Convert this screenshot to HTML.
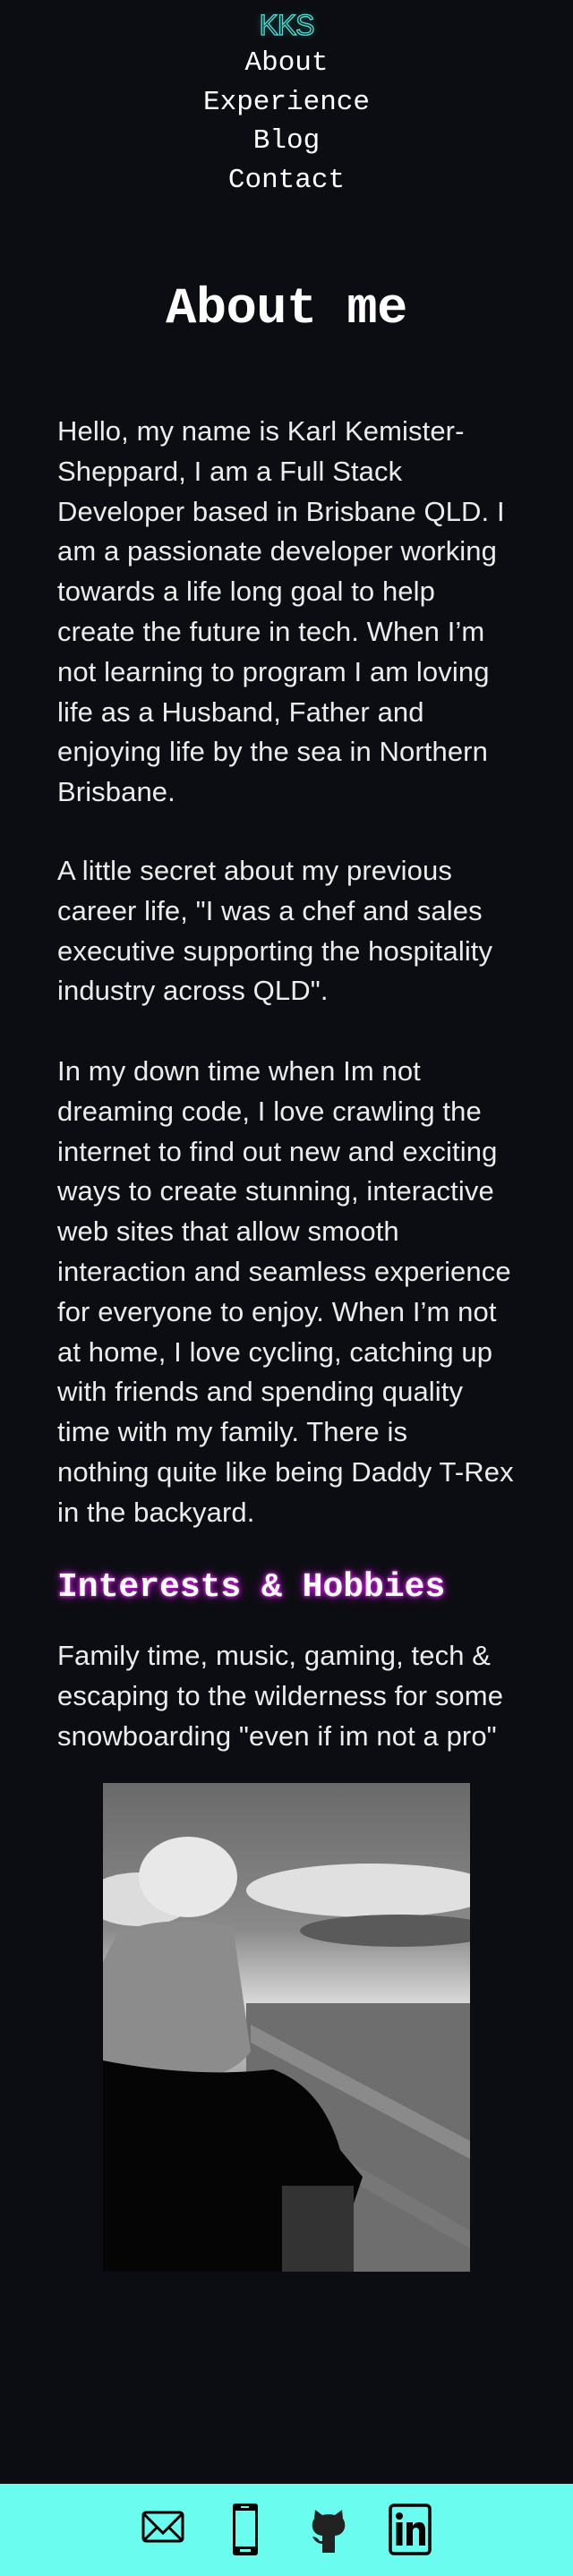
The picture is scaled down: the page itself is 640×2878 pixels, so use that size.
<!DOCTYPE html>
<html><head><meta charset="utf-8">
<style>
*{margin:0;padding:0;box-sizing:border-box}
html,body{width:640px;height:2878px;overflow:hidden}
body{background:#0c0d12;color:#fff;position:relative;font-family:"Liberation Sans",sans-serif}
.logo{position:absolute;left:0;width:640px;top:10px;text-align:center;font-family:"Liberation Sans",sans-serif;font-size:32px;color:transparent;-webkit-text-stroke:1.3px #4fe3d8;letter-spacing:-1px;text-shadow:0 0 8px rgba(79,227,216,.35)}
.nav{position:absolute;left:0;width:640px;top:49px;text-align:center;font-family:"Liberation Mono",monospace;font-size:31px;line-height:43.5px;letter-spacing:0}
h1{position:absolute;left:0;width:640px;top:311px;text-align:center;font-family:"Liberation Mono",monospace;font-weight:bold;font-size:57px;letter-spacing:-0.5px;line-height:70px}
.p{position:absolute;left:64px;font-size:31px;line-height:44.8px;white-space:nowrap;letter-spacing:0.1px;color:#ececec}
.p span{display:block}
h2{position:absolute;left:64px;top:1752px;font-family:"Liberation Mono",monospace;font-weight:bold;font-size:38px;letter-spacing:0px;color:#fff;text-shadow:0 0 6px #c01bd0,0 0 12px #a010b8,0 0 3px #e040f0}
.photo{position:absolute;left:115px;top:1992px;width:410px;height:546px}
footer{position:absolute;left:0;top:2775px;width:640px;height:103px;background:#69fcef;overflow:hidden}
</style></head><body>
<div class="logo">KKS</div>
<div class="nav">About<br>Experience<br>Blog<br>Contact</div>
<h1>About me</h1>
<div class="p" style="top:460px">
<span>Hello, my name is Karl Kemister-</span>
<span>Sheppard, I am a Full Stack</span>
<span>Developer based in Brisbane QLD. I</span>
<span>am a passionate developer working</span>
<span>towards a life long goal to help</span>
<span>create the future in tech. When I’m</span>
<span>not learning to program I am loving</span>
<span>life as a Husband, Father and</span>
<span>enjoying life by the sea in Northern</span>
<span>Brisbane.</span>
</div>
<div class="p" style="top:951px">
<span>A little secret about my previous</span>
<span>career life, "I was a chef and sales</span>
<span>executive supporting the hospitality</span>
<span>industry across QLD".</span>
</div>
<div class="p" style="top:1175px">
<span>In my down time when Im not</span>
<span>dreaming code, I love crawling the</span>
<span>internet to find out new and exciting</span>
<span>ways to create stunning, interactive</span>
<span>web sites that allow smooth</span>
<span>interaction and seamless experience</span>
<span>for everyone to enjoy. When I’m not</span>
<span>at home, I love cycling, catching up</span>
<span>with friends and spending quality</span>
<span>time with my family. There is</span>
<span>nothing quite like being Daddy T-Rex</span>
<span>in the backyard.</span>
</div>
<h2>Interests &amp; Hobbies</h2>
<div class="p" style="top:1828px">
<span>Family time, music, gaming, tech &amp;</span>
<span>escaping to the wilderness for some</span>
<span>snowboarding "even if im not a pro"</span>
</div>
<svg class="photo" viewBox="0 0 410 546" preserveAspectRatio="none">
<defs>
<linearGradient id="sky" x1="0" y1="0" x2="0" y2="1"><stop offset="0" stop-color="#6a6a6a"/><stop offset=".3" stop-color="#8a8a8a"/><stop offset=".45" stop-color="#d8d8d8"/><stop offset=".6" stop-color="#a8a8a8"/><stop offset="1" stop-color="#7a7a7a"/></linearGradient>
</defs>
<rect width="410" height="546" fill="url(#sky)"/>
<ellipse cx="300" cy="120" rx="140" ry="30" fill="#e0e0e0"/>
<ellipse cx="330" cy="165" rx="110" ry="18" fill="#5a5a5a"/>
<ellipse cx="40" cy="130" rx="60" ry="30" fill="#dcdcdc"/>
<rect x="160" y="246" width="250" height="300" fill="#6e6e6e"/>
<polygon points="165,270 410,400 410,420 165,290" fill="#8a8a8a"/>
<polygon points="200,380 410,500 410,520 200,400" fill="#777"/>
<ellipse cx="95" cy="105" rx="55" ry="45" fill="#e8e8e8"/>
<path d="M15,170 Q60,145 145,160 L165,300 Q140,335 60,335 L0,325 L0,200Z" fill="#8c8c8c"/>
<path d="M0,310 Q100,330 190,320 Q245,340 265,410 L290,440 L280,470 L220,460 L200,546 L0,546Z" fill="#050505"/>
<rect x="200" y="450" width="80" height="96" fill="#333"/>
</svg>
<footer>
<svg style="position:absolute;left:158px;top:30px" width="48" height="36" viewBox="0 0 48 36"><rect x="2" y="2" width="44" height="32" rx="3" fill="none" stroke="#000" stroke-width="3"/><path d="M3,4 L24,25 L45,4 M3,33 L18,18 M45,33 L30,18" fill="none" stroke="#000" stroke-width="3"/></svg>
<svg style="position:absolute;left:260px;top:22px" width="28" height="58" viewBox="0 0 28 58"><rect x="0" y="0" width="28" height="58" rx="3" fill="#000"/><rect x="3" y="8" width="22" height="40" fill="#69fcef"/><rect x="8" y="51" width="12" height="3" fill="#69fcef"/><rect x="9" y="3" width="9" height="2" fill="#69fcef"/></svg>
<svg style="position:absolute;left:348px;top:27px" width="38" height="50" viewBox="0 0 38 50"><path d="M4,2 L12,8 Q19,6 26,8 L34,2 L35,12 Q38,16 37,22 Q35,30 26,31 L26,50 L12,50 L12,40 Q5,40 1,32 Q6,32 9,37 L12,37 L12,31 Q3,30 1,22 Q0,16 3,12Z" fill="#222"/></svg>
<svg style="position:absolute;left:434px;top:22px" width="48" height="58" viewBox="0 0 48 58"><rect x="2" y="2" width="44" height="54" rx="4" fill="none" stroke="#000" stroke-width="3.5"/><circle cx="12" cy="14" r="4" fill="#000"/><rect x="8.5" y="21" width="7" height="26" fill="#000"/><path d="M20,21 H27 V25 Q30,20 36,21 Q41,22 41,30 V47 H34 V31 Q34,27 30.5,27 Q27,27 27,31 V47 H20Z" fill="#000"/></svg>
</footer>
</body></html>
